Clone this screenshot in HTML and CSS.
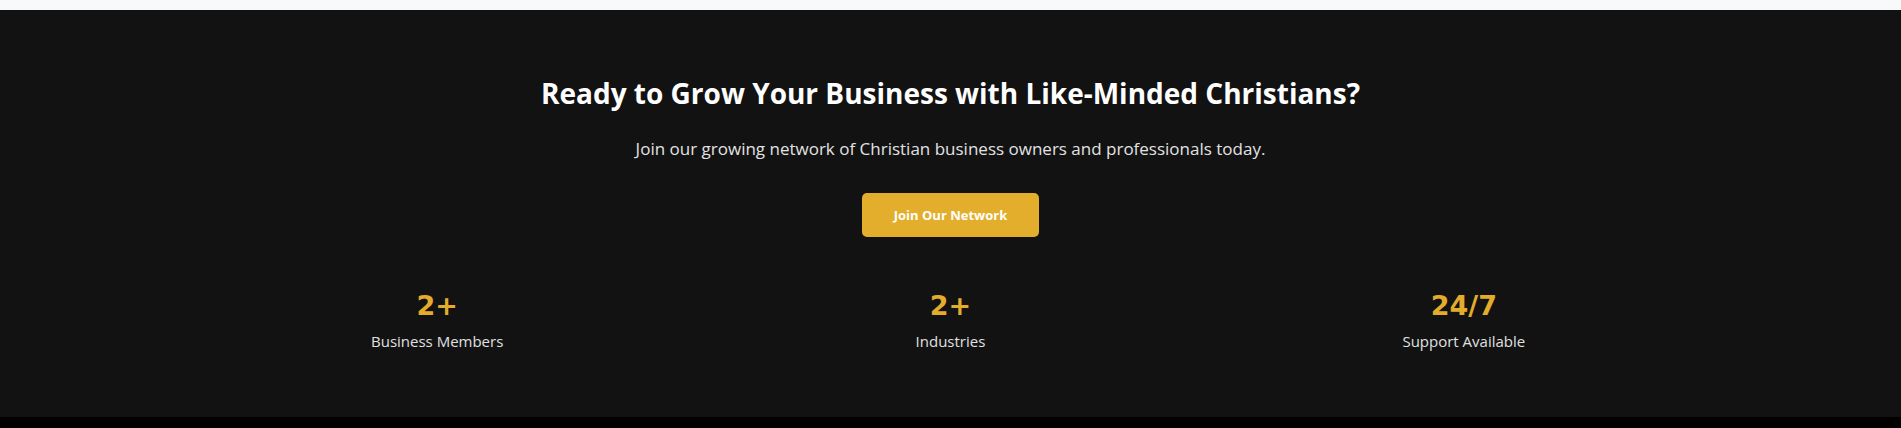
FILE: index.html
```html
<!DOCTYPE html>
<html lang="en">
<head>
<meta charset="utf-8">
<title>Join Our Network</title>
<link rel="stylesheet" href="styles.css">
</head>
<body>
<div class="top-strip"></div>
<section class="cta">
  <h2 class="cta-title">Ready to Grow Your Business with Like-Minded Christians?</h2>
  <p class="cta-lead">Join our growing network of Christian business owners and professionals today.</p>
  <a class="cta-button" href="#">Join Our Network</a>
  <div class="stats">
    <div class="stat">
      <div class="stat-num">2+</div>
      <div class="stat-label">Business Members</div>
    </div>
    <div class="stat">
      <div class="stat-num">2+</div>
      <div class="stat-label">Industries</div>
    </div>
    <div class="stat">
      <div class="stat-num">24/7</div>
      <div class="stat-label">Support Available</div>
    </div>
  </div>
</section>
<footer class="bottom-strip"></footer>
</body>
</html>
```
FILE: styles.css
```css
* { box-sizing: border-box; }
html, body { margin: 0; padding: 0; }
body {
  background: #000;
  font-family: "Open Sans", "Noto Sans", sans-serif;
}
.top-strip {
  height: 10px;
  background: #f8f9fa;
}
.cta {
  background: #121212;
  height: 407px;
  display: flex;
  flex-direction: column;
  align-items: center;
  padding-top: 67px;
}
.cta-title {
  margin: 0;
  color: #fff;
  font-size: 28px;
  font-weight: 700;
  line-height: 1.2;
  letter-spacing: 0;
}
.cta-lead {
  margin: 25px 0 0;
  color: #e2e2e2;
  font-size: 17px;
  line-height: 1.5;
  letter-spacing: 0;
}
.cta-button {
  margin-top: 32px;
  width: 177px;
  height: 44px;
  display: flex;
  align-items: center;
  justify-content: center;
  background: #e3ae2c;
  color: #fff;
  border-radius: 5px;
  font-size: 13px;
  font-weight: 700;
  text-decoration: none;
}
.stats {
  margin-top: 53px;
  width: 1540px;
  display: grid;
  grid-template-columns: repeat(3, 1fr);
}
.stat {
  display: flex;
  flex-direction: column;
  align-items: center;
}
.stat-num {
  font-family: "DejaVu Sans", sans-serif;
  font-weight: 700;
  font-size: 27px;
  line-height: 1.2;
  color: #e3ac2a;
}
.stat-label {
  margin-top: 9px;
  color: #e0e0e0;
  font-size: 15px;
  line-height: 1.4;
}
.bottom-strip {
  height: 11px;
  background: #000;
}
```
